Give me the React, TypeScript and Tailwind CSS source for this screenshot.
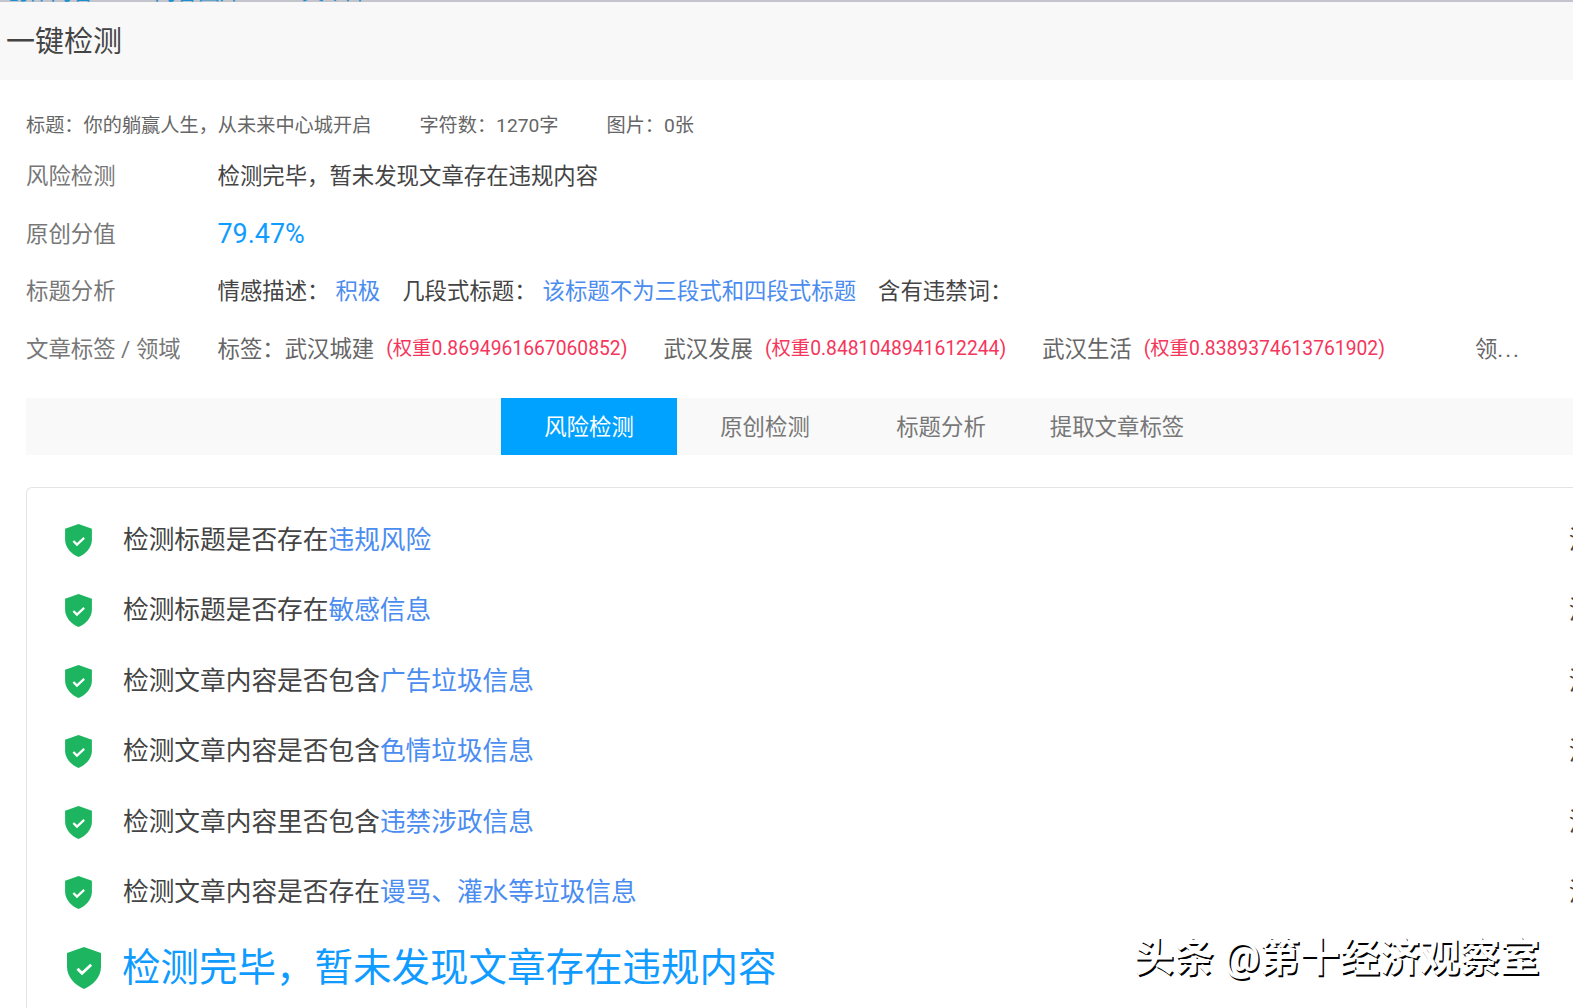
const FONT = "font-['Roboto','Noto_Sans_CJK_SC',sans-serif]";

const checks = [
  { text: "检测标题是否存在", link: "违规风险" },
  { text: "检测标题是否存在", link: "敏感信息" },
  { text: "检测文章内容是否包含", link: "广告垃圾信息" },
  { text: "检测文章内容是否包含", link: "色情垃圾信息" },
  { text: "检测文章内容里否包含", link: "违禁涉政信息" },
  { text: "检测文章内容是否存在", link: "谩骂、灌水等垃圾信息" },
];

function Shield({ className }: { className: string }) {
  return (
    <svg viewBox="0 0 26 32" className={className}>
      <path d="M13 0 L26 4.5 V15 C26 23 20 29 13 32 C6 29 0 23 0 15 V4.5 Z" fill="#1db560" />
      <path d="M8 16.5 L11.5 20 L18.5 13.5" fill="none" stroke="#fff" strokeWidth="2.2" />
    </svg>
  );
}

function InfoRow({ label, children, className }: { label: string; children: React.ReactNode; className: string }) {
  return (
    <div className={`flex items-center text-[22.4px] ${className}`}>
      <div className="w-[191.5px] shrink-0 text-[#777]">{label}</div>
      {children}
    </div>
  );
}

export default function App() {
  return (
    <div className={`h-[1008px] w-[1573px] overflow-hidden bg-white ${FONT}`}>
      {/* nav bar above, scrolled almost out of view */}
      <div className="flex h-[2px] overflow-hidden bg-[#c4c4cc] pl-[6px] text-[22px] leading-[22px] text-[#1a8fd0]">
        <div className="-mt-[19px] flex gap-[60px] whitespace-nowrap">
          <span>创作内容</span>
          <span>内容图库</span>
          <span>文章库</span>
        </div>
      </div>
      <div className="flex h-[78px] items-center bg-[#f8f8f8] pt-[4px] pl-[6px] text-[29px] text-[#444]">一键检测</div>

      <div className="pl-[26px]">
        <div className="mt-[32px] flex h-[28px] items-center text-[19.2px] text-[#666]">
          <span>标题：你的躺赢人生，从未来中心城开启</span>
          <span className="ml-[48px]">字符数：1270字</span>
          <span className="ml-[48px]">图片：0张</span>
        </div>

        <InfoRow label="风险检测" className="mt-[13px] h-[48px]">
          <span className="text-[#444]">检测完毕，暂未发现文章存在违规内容</span>
        </InfoRow>

        <InfoRow label="原创分值" className="mt-[9.5px] h-[48px]">
          <span className="text-[26.9px] text-[#0f9bff]">79.47%</span>
        </InfoRow>

        <InfoRow label="标题分析" className="mt-[9.5px] h-[48px]">
          <span className="text-[#444]">情感描述：</span>
          <span className="ml-[6px] text-[#4a8cf0]">积极</span>
          <span className="ml-[22px] text-[#444]">几段式标题：</span>
          <span className="ml-[6px] text-[#4a8cf0]">该标题不为三段式和四段式标题</span>
          <span className="ml-[22px] text-[#444]">含有违禁词：</span>
        </InfoRow>

        <InfoRow label="文章标签 / 领域" className="mt-[9.5px] h-[48px] whitespace-nowrap">
          <span className="text-[#666]">标签：武汉城建</span>
          <span className="ml-[12px] text-[19.3px] text-[#f5365c]">(权重0.8694961667060852)</span>
          <span className="ml-[36px] text-[#666]">武汉发展</span>
          <span className="ml-[12px] text-[19.3px] text-[#f5365c]">(权重0.8481048941612244)</span>
          <span className="ml-[36px] text-[#666]">武汉生活</span>
          <span className="ml-[12px] text-[19.3px] text-[#f5365c]">(权重0.8389374613761902)</span>
          <span className="ml-[90px] text-[#666]">
            领<span className="tracking-[2px]">...</span>
          </span>
        </InfoRow>

        <div className="mt-[24.5px] flex h-[57px] bg-[#f9f9f9] pl-[475px] text-[22.4px] text-[#777]">
          <div className="flex w-[176px] items-center justify-center bg-[#00a2ff] pt-[2px] text-white">风险检测</div>
          <div className="flex w-[176px] items-center justify-center pt-[2px]">原创检测</div>
          <div className="flex w-[176px] items-center justify-center pt-[2px]">标题分析</div>
          <div className="flex w-[176px] items-center justify-center pt-[2px]">提取文章标签</div>
        </div>

        <div className="mt-[32px] h-[600px] rounded-tl-[6px] border-t border-l border-[#e4e4e4] pt-[17px] pl-[38px]">
          {checks.map((c, i) => (
            <div key={i} className="flex h-[70.5px] w-[1555px] items-center text-[25.7px] text-[#444]">
              <Shield className="h-[33px] w-[27px] shrink-0" />
              <span className="ml-[31px]">{c.text}</span>
              <span className="text-[#4a8cf0]">{c.link}</span>
              <span className="ml-auto">没有</span>
            </div>
          ))}
          <div className="flex h-[80px] items-center">
            <Shield className="ml-[2px] h-[42px] w-[34px] shrink-0" />
            <span className="ml-[21px] text-[38.5px] text-[#0f9bff]">检测完毕，暂未发现文章存在违规内容</span>
          </div>
        </div>
      </div>

      <div className="absolute top-[928px] left-[1134px] text-[40px] font-bold whitespace-nowrap text-white [text-shadow:1.5px_1.5px_0.5px_#000]">头条 @第十经济观察室</div>
    </div>
  );
}
